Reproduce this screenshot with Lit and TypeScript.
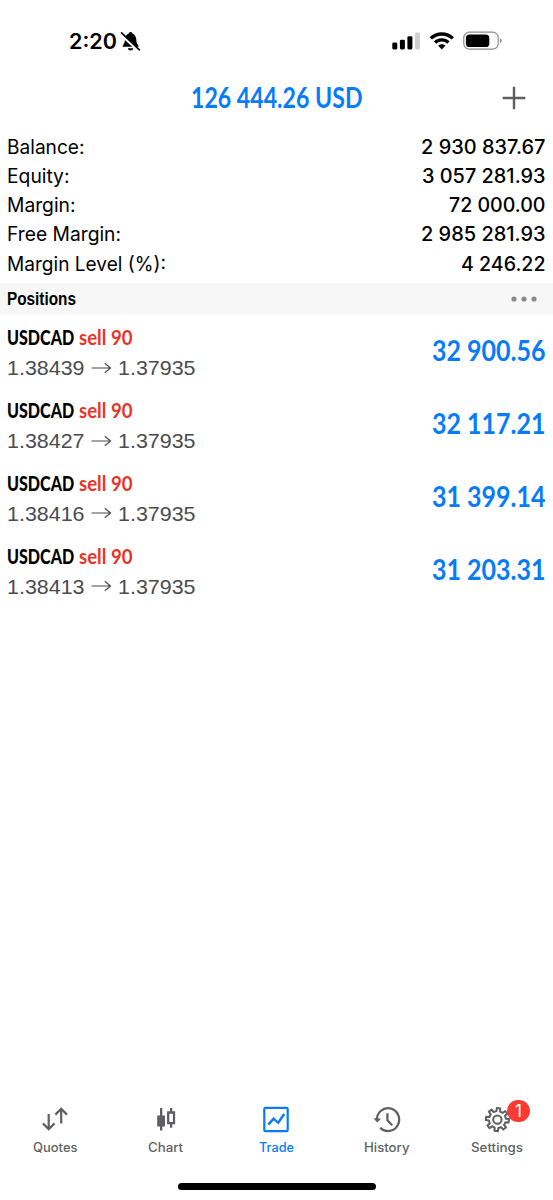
import { LitElement, html, css, svg } from "lit";
import { customElement, property } from "lit/decorators.js";

// Condenses or widens a run of text so that it fills an exact width.
@customElement("fit-text")
class FitText extends LitElement {
  @property({ type: Number }) width = 0;
  @property() text = "";
  static styles = css`
    :host { display: inline-block; white-space: nowrap; flex: none; }
    .run { display: inline-block; transform-origin: 0 50%; }
  `;
  updated() {
    const run = this.renderRoot.querySelector(".run") as HTMLElement;
    run.style.transform = "none";
    const natural = run.getBoundingClientRect().width;
    this.style.width = this.width + "px";
    if (natural) run.style.transform = `scaleX(${this.width / natural})`;
  }
  render() {
    return html`<span class="run">${this.text}</span>`;
  }
}

const summary = [
  { label: "Balance:", lw: 77.5, value: "2 930 837.67", vw: 124.5 },
  { label: "Equity:", lw: 62.5, value: "3 057 281.93", vw: 123.5 },
  { label: "Margin:", lw: 68.5, value: "72 000.00", vw: 96.5 },
  { label: "Free Margin:", lw: 114, value: "2 985 281.93", vw: 124.5 },
  { label: "Margin Level (%):", lw: 159, value: "4 246.22", vw: 84.5 },
];

const positions = [
  { open: "1.38439", profit: "32 900.56" },
  { open: "1.38427", profit: "32 117.21" },
  { open: "1.38416", profit: "31 399.14" },
  { open: "1.38413", profit: "31 203.31" },
];

const quotesIcon = svg`<g fill="none" stroke="currentColor" stroke-width="2.2">
  <path d="M8.7 9V24M2.9 18.4 8.7 24.2 14.5 18.4"/><path d="M21.2 18.5V4M15.4 9.6 21.2 3.8 27 9.6"/></g>`;
const chartIcon = svg`<path d="M6.2 10.5H9V3H11.3V10.5H14V21.5H11.3V25.5H9V21.5H6.2Z" fill="currentColor"/>
  <path d="M17.2 7.5H23V18.2H17.2ZM20.1 3V7.5M20.1 18.2V22.7" fill="none" stroke="currentColor" stroke-width="2.3"/>`;
const tradeIcon = svg`<g fill="none" stroke="currentColor" stroke-width="2.2">
  <rect x="3.3" y="2.9" width="23.4" height="23.2" rx="1.2"/><path d="M7.4 19.6 12.6 13.7 17.2 17.8 23.2 9" stroke-width="2.4"/></g>`;
const historyIcon = svg`<g fill="none" stroke="currentColor" stroke-width="2.2">
  <path d="M5 15.6A11.1 11.5 0 1 1 8.2 22.7"/><path d="M15.4 8.2V15.3L20.2 20.2"/></g>
  <path d="M1.4 13.2 9 13.6 5.3 17.6Z" fill="currentColor"/>`;

const gearPath = (() => {
  const pts: string[] = [];
  const n = 8;
  for (let i = 0; i < n; i++) {
    const a = (i * 360) / n - 84;
    for (const [d, r] of [[-12.5, 8.5], [-8.5, 11.6], [8.5, 11.6], [12.5, 8.5]]) {
      const t = ((a + d) * Math.PI) / 180;
      pts.push(`${(15.4 + r * Math.cos(t)).toFixed(2)} ${(14.6 + r * Math.sin(t)).toFixed(2)}`);
    }
  }
  return "M" + pts.join("L") + "Z";
})();
const settingsIcon = svg`<g fill="none" stroke="currentColor" stroke-width="2" stroke-linejoin="round">
  <path d=${gearPath}/><circle cx="15.4" cy="14.6" r="4.2"/></g>`;

const tabs = [
  { name: "Quotes", w: 44.5, icon: quotesIcon },
  { name: "Chart", w: 35, icon: chartIcon },
  { name: "Trade", w: 35, icon: tradeIcon, active: true },
  { name: "History", w: 45.5, icon: historyIcon },
  { name: "Settings", w: 52, icon: settingsIcon, badge: "1" },
];

@customElement("app-root")
class AppRoot extends LitElement {
  static styles = css`
    :host {
      display: flex; flex-direction: column; box-sizing: border-box;
      width: 553px; height: 1200px; overflow: hidden; background: #fff; color: #000;
      font-family: Inter, "Liberation Sans", sans-serif;
    }
    svg { display: block; flex: none; }
    .status { display: flex; align-items: center; height: 64px; padding: 18px 50px 0 69px; box-sizing: border-box; }
    .time { font-size: 21.5px; font-weight: 600; line-height: 46px; }
    .bell { margin-left: 3px; }
    .system { display: flex; align-items: center; gap: 8px; margin-left: auto; }
    .header { display: grid; grid-template-columns: 1fr auto 1fr; align-items: center; height: 67px; color: #087cf7; }
    .total { grid-column: 2; font: 700 27.7px/40px Lato, sans-serif; }
    .plus { justify-self: end; margin-right: 27px; }
    .summary { display: flex; flex-direction: column; height: 152.3px; padding-top: 1.5px; box-sizing: border-box; }
    .row { display: flex; justify-content: space-between; height: 29.3px; line-height: 29.3px; padding: 0 7.8px 0 7.2px; font-size: 19.6px; }
    .value { font-weight: 450; }
    .section { display: flex; align-items: center; justify-content: space-between; height: 32px; background: #f7f7f7; padding: 0 16px 0 7px; flex: none; }
    .section-title { font: 700 18.4px/32px "Liberation Sans", sans-serif; }
    .position { display: flex; justify-content: space-between; height: 72.8px; box-sizing: border-box; padding: 7px 8px 0 7.2px; flex: none; }
    .name { display: flex; gap: 4.5px; height: 30px; font: 900 20.8px/30px Lato, sans-serif; }
    .side { color: #e83527; font-weight: 700; }
    .prices { display: flex; align-items: center; height: 31px; font: 400 20.8px/31px "Liberation Sans", sans-serif; color: #4b4b4f; }
    .arrow { margin: 0 6px; }
    .profit { font: 700 28.3px/57px Lato, sans-serif; color: #087cf7; }
    .spacer { flex: 1; }
    .tabs { display: grid; grid-template-columns: repeat(5, 1fr); height: 78px; color: #5f5f61; }
    .tab { display: flex; flex-direction: column; align-items: center; }
    .active { color: #087cf7; }
    .glyph { position: relative; height: 30px; margin-right: 0.6px; }
    .label { font-size: 12.5px; font-weight: 500; line-height: 26.6px; margin-right: 0.8px; }
    .badge {
      position: absolute; left: 24.8px; top: -5.5px; width: 22.5px; height: 22.5px; border-radius: 50%;
      background: #fb3a34; color: #fff; font-size: 17px; line-height: 22.5px; text-align: center;
    }
    .home { align-self: center; width: 198px; height: 6.5px; border-radius: 4px; background: #000; margin-bottom: 10.5px; flex: none; }
  `;

  render() {
    return html`
      <div class="status">
        <fit-text class="time" width="48" text="2:20"></fit-text>
        <svg class="bell" width="21" height="21" viewBox="0 0 21 21">
          <path d="M2.6 15.8C2.6 13.9 4.7 13.3 4.8 9.6 4.9 5.8 6.3 3.2 8.8 2.4 9.2 0.4 12 0.4 12.4 2.4 14.9 3.2 16.3 5.8 16.4 9.6 16.5 13.3 18.6 13.9 18.6 15.8ZM7.8 17.2H13.4C12.8 20.2 8.4 20.2 7.8 17.2Z" fill="#000"/>
          <path d="M0.8 3.2 18.6 19.6" stroke="#fff" stroke-width="3"/>
          <path d="M1.6 1.9 19.4 18.8" stroke="#000" stroke-width="1.6" stroke-linecap="round"/>
        </svg>
        <div class="system">
          <svg width="29" height="20" viewBox="0 0 29 20">
            <rect x="0.3" y="11.5" width="5" height="7" rx="1.4"/>
            <rect x="7.9" y="8.7" width="5" height="9.8" rx="1.4"/>
            <rect x="15.4" y="5.2" width="5" height="13.3" rx="1.4"/>
            <rect x="23" y="1.5" width="5" height="17" rx="1.4" fill="#cfcfcf"/>
          </svg>
          <svg width="26" height="20" viewBox="0 0 26 20">
            <g fill="none" stroke="#000" stroke-width="3.4">
              <path d="M1.8 7.4A15.8 15.8 0 0 1 23.8 7.4"/><path d="M6.1 11.6A9.7 9.7 0 0 1 19.5 11.6"/>
            </g>
            <path d="M9.2 14.7A5.2 5.2 0 0 1 16.4 14.7L12.8 18.4Z"/>
          </svg>
          <svg width="40" height="20" viewBox="0 0 40 20">
            <rect x="0.8" y="1.2" width="34.4" height="17" rx="5.6" fill="none" stroke="#8a8a8a" stroke-width="1.2"/>
            <rect x="2.9" y="3.4" width="23.4" height="12.6" rx="3.6"/>
            <path d="M37 7.2C39.3 8 39.3 11.4 37 12.2Z" fill="#8a8a8a"/>
          </svg>
        </div>
      </div>
      <div class="header">
        <fit-text class="total" width="171.5" text="126 444.26 USD"></fit-text>
        <svg class="plus" width="24" height="24" viewBox="0 0 24 24"><path d="M12 0.7V23.3M0.7 12H23.3" stroke="#5f5f61" stroke-width="2.4"/></svg>
      </div>
      <div class="summary">
        ${summary.map((r) => html`<div class="row">
          <fit-text .width=${r.lw} .text=${r.label}></fit-text>
          <fit-text class="value" .width=${r.vw} .text=${r.value}></fit-text>
        </div>`)}
      </div>
      <div class="section">
        <fit-text class="section-title" width="69" text="Positions"></fit-text>
        <svg width="26" height="6" viewBox="0 0 26 6" fill="#8a8a8d"><circle cx="3" cy="3" r="2.6"/><circle cx="13" cy="3" r="2.6"/><circle cx="23" cy="3" r="2.6"/></svg>
      </div>
      ${positions.map((p) => html`<div class="position">
        <div>
          <div class="name">
            <fit-text width="67.2" text="USDCAD"></fit-text>
            <fit-text class="side" width="53.5" text="sell 90"></fit-text>
          </div>
          <div class="prices">
            <fit-text width="77.5" .text=${p.open}></fit-text>
            <svg class="arrow" width="21" height="12" viewBox="0 0 21 12"><path d="M0.5 6H19.3M13.8 1.2 19.5 6 13.8 10.8" fill="none" stroke="#4b4b4f" stroke-width="1.2"/></svg>
            <fit-text width="77.5" text="1.37935"></fit-text>
          </div>
        </div>
        <fit-text class="profit" width="113.5" .text=${p.profit}></fit-text>
      </div>`)}
      <div class="spacer"></div>
      <div class="tabs">
        ${tabs.map((t) => html`<div class="tab ${t.active ? "active" : ""}">
          <div class="glyph">
            <svg width="30" height="30" viewBox="0 0 30 30">${t.icon}</svg>
            ${t.badge ? html`<div class="badge">${t.badge}</div>` : ""}
          </div>
          <fit-text class="label" .width=${t.w} .text=${t.name}></fit-text>
        </div>`)}
      </div>
      <div class="home"></div>
    `;
  }
}
